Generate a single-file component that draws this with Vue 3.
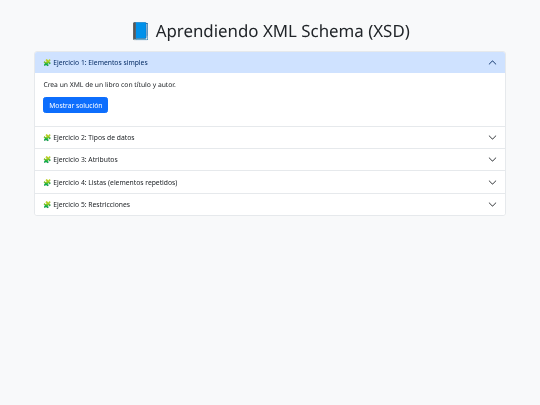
<template>
  <div class="page">
    <h1 class="title">📘 Aprendiendo XML Schema (XSD)</h1>
    <div class="accordion">
      <div v-for="(ex, index) in ejercicios" :key="ex.titulo" class="item">
        <button :class="['header', { open: abierto === index }]" @click="toggle(index)">
          <span>🧩 {{ ex.titulo }}</span>
          <svg class="chevron" viewBox="0 0 16 16" fill="currentColor">
            <path
              fill-rule="evenodd"
              d="M1.646 4.646a.5.5 0 0 1 .708 0L8 10.293l5.646-5.647a.5.5 0 0 1 .708.708l-6 6a.5.5 0 0 1-.708 0l-6-6a.5.5 0 0 1 0-.708z"
            />
          </svg>
        </button>
        <div v-if="abierto === index" class="body">
          <p class="text">{{ ex.texto }}</p>
          <button class="btn">Mostrar solución</button>
        </div>
      </div>
    </div>
  </div>
</template>

<script setup>
import { ref } from "vue";

const ejercicios = [
  { titulo: "Ejercicio 1: Elementos simples", texto: "Crea un XML de un libro con título y autor." },
  { titulo: "Ejercicio 2: Tipos de datos", texto: "" },
  { titulo: "Ejercicio 3: Atributos", texto: "" },
  { titulo: "Ejercicio 4: Listas (elementos repetidos)", texto: "" },
  { titulo: "Ejercicio 5: Restricciones", texto: "" },
];

const abierto = ref(0);

const toggle = (index) => {
  abierto.value = abierto.value === index ? -1 : index;
};
</script>

<style>
html,
body {
  margin: 0;
  background: #f8f9fa;
}
</style>

<style scoped>
.page {
  min-height: 405px;
  box-sizing: border-box;
  padding: 20px 34px 0;
  background: #f8f9fa;
  font-family: "Noto Sans", "Open Sans", sans-serif;
  color: #212529;
  text-rendering: geometricPrecision;
  will-change: transform;
}

.title {
  margin: 0 0 10px;
  font-size: 16.875px;
  font-weight: 400;
  line-height: 21px;
  text-align: center;
}

.accordion {
  background: #fff;
  border: 1px solid #e6e9ec;
  border-radius: 3px;
  overflow: hidden;
}

.item + .item {
  border-top: 1px solid #e6e9ec;
}

.header {
  width: 100%;
  height: 21.3px;
  padding: 0 8.4px;
  display: flex;
  align-items: center;
  justify-content: space-between;
  border: none;
  background: #fff;
  color: #212529;
  font-family: inherit;
  font-size: 6.75px;
  cursor: pointer;
}

.header.open {
  background: #cfe2ff;
  color: #052c65;
}

.header.open .chevron {
  transform: rotate(180deg);
}

.chevron {
  width: 9px;
  height: 9px;
}

.body {
  padding: 7px 8.4px 12.5px;
}

.text {
  margin: 0 0 6.5px;
  font-size: 6.75px;
  line-height: 10px;
}

.btn {
  display: block;
  padding: 0 4.8px;
  height: 16.5px;
  border: 0.42px solid #0d6efd;
  border-radius: 2.5px;
  background: #0d6efd;
  color: #fff;
  font-family: inherit;
  font-size: 6.75px;
  cursor: pointer;
}
</style>
